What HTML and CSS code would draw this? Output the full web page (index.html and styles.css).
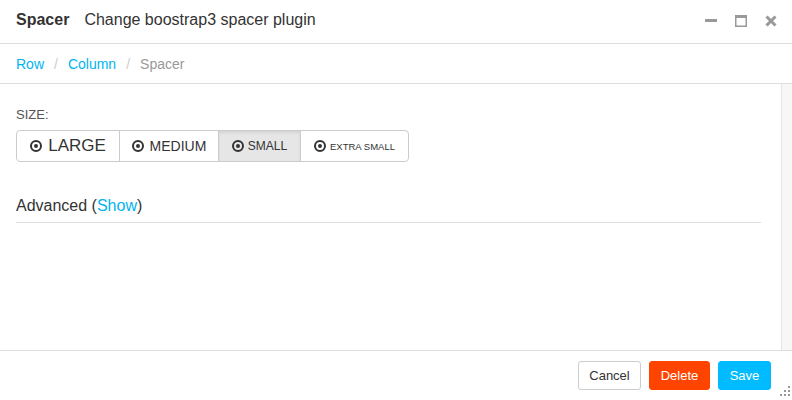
FILE: index.html
```html
<!DOCTYPE html>
<html>
<head>
<meta charset="utf-8">
<link rel="stylesheet" href="styles.css">
</head>
<body>
<div class="dialog">
  <div class="header">
    <div class="title"><span class="name">Spacer</span><span class="sub">Change boostrap3 spacer plugin</span></div>
    <div class="controls">
      <svg width="12" height="12" viewBox="0 0 12 12"><rect x="0" y="4" width="12" height="3" fill="#999"/></svg>
      <svg width="12" height="12" viewBox="0 0 12 12"><rect x="0.75" y="0.75" width="10.5" height="10.5" fill="none" stroke="#999" stroke-width="1.5"/><rect x="0" y="0" width="12" height="3" fill="#999"/></svg>
      <svg width="12" height="12" viewBox="0 0 12 12"><path d="M1.5 1.5 L10.5 10.5 M10.5 1.5 L1.5 10.5" stroke="#999" stroke-width="3"/></svg>
    </div>
  </div>
  <div class="crumbs">
    <a class="link">Row</a><span class="sep">/</span><a class="link">Column</a><span class="sep">/</span><span class="current">Spacer</span>
  </div>
  <div class="main">
    <div class="content">
      <div class="label">SIZE:</div>
      <div class="btn-group">
        <div class="seg seg-lg"><span class="radio"></span>LARGE</div>
        <div class="seg seg-md"><span class="radio"></span>MEDIUM</div>
        <div class="seg seg-sm active"><span class="radio"></span>SMALL</div>
        <div class="seg seg-xs"><span class="radio"></span>EXTRA SMALL</div>
      </div>
      <div class="advanced">Advanced (<a class="link">Show</a>)</div>
    </div>
    <div class="scrollbar"></div>
  </div>
  <div class="footer">
    <button class="btn btn-cancel">Cancel</button>
    <button class="btn btn-delete">Delete</button>
    <button class="btn btn-save">Save</button>
    <div class="grip">
      <svg width="12" height="12" viewBox="0 0 12 12">
        <rect x="9" y="0" width="2" height="2" fill="#999"/>
        <rect x="5" y="4" width="2" height="2" fill="#999"/>
        <rect x="9" y="4" width="2" height="2" fill="#999"/>
        <rect x="1" y="8" width="2" height="2" fill="#999"/>
        <rect x="5" y="8" width="2" height="2" fill="#999"/>
        <rect x="9" y="8" width="2" height="2" fill="#999"/>
      </svg>
    </div>
  </div>
</div>
</body>
</html>
```

FILE: styles.css
```css
html, body {
  margin: 0;
  padding: 0;
  background: #fff;
}
body {
  font-family: "Liberation Sans", Arial, sans-serif;
  color: #333;
}
.dialog {
  width: 792px;
  height: 400px;
  display: flex;
  flex-direction: column;
  overflow: hidden;
}
.header {
  height: 43px;
  border-bottom: 1px solid #ddd;
  display: flex;
  align-items: center;
  justify-content: space-between;
  padding: 0 15px 0 16px;
  box-sizing: content-box;
}
.title {
  font-size: 16px;
  color: #333;
  padding-bottom: 4px;
}
.name {
  font-weight: bold;
  margin-right: 15px;
}
.controls {
  display: flex;
  gap: 18px;
  padding-bottom: 1px;
}
.controls svg {
  display: block;
}
.crumbs {
  height: 38px;
  border-bottom: 1px solid #ddd;
  display: flex;
  align-items: center;
  padding-left: 16px;
  font-size: 14px;
  padding-top: 1px;
}
.link {
  color: #00b4f0;
  text-decoration: none;
}
.sep {
  color: #ccc;
  margin: 0 10px;
}
.current {
  color: #999;
}
.main {
  flex: 1;
  display: flex;
  min-height: 0;
}
.content {
  flex: 1;
  padding: 23px 20px 0 16px;
}
.scrollbar {
  width: 10px;
  background: #f7f7f7;
  border-left: 1px solid #e6e6e6;
}
.label {
  font-size: 13px;
  color: #555;
  line-height: 15px;
  margin-bottom: 8px;
  padding-top: 0;
}
.btn-group {
  display: inline-flex;
  border: 1px solid #ccc;
  border-radius: 4px;
  height: 30px;
  overflow: hidden;
}
.seg {
  display: flex;
  align-items: center;
  justify-content: center;
  border-right: 1px solid #ccc;
  color: #333;
}
.seg:last-child {
  border-right: none;
}
.seg-lg { width: 102px; font-size: 17px; }
.seg-md { width: 98px; font-size: 14px; }
.seg-sm { width: 81px; font-size: 12px; }
.seg-xs { width: 107px; font-size: 9.5px; }
.active {
  background: #e6e6e6;
  box-shadow: inset 0 2px 3px rgba(0,0,0,0.08);
}
.radio {
  width: 8px;
  height: 8px;
  border: 2px solid #333;
  border-radius: 50%;
  position: relative;
  margin-right: 6px;
  flex: none;
}
.seg-sm .radio, .seg-xs .radio { margin-right: 4px; }
.radio::after {
  content: "";
  position: absolute;
  left: 2px;
  top: 2px;
  width: 4px;
  height: 4px;
  border-radius: 50%;
  background: #333;
}
.advanced {
  margin-top: 35px;
  font-size: 16px;
  line-height: 18px;
  padding-bottom: 7px;
  border-bottom: 1px solid #ddd;
}
.footer {
  height: 49px;
  border-top: 1px solid #ddd;
  display: flex;
  align-items: center;
  justify-content: flex-end;
  gap: 8px;
  padding-right: 21px;
  position: relative;
}
.btn {
  height: 29px;
  font-family: "Liberation Sans", Arial, sans-serif;
  font-size: 13px;
  border-radius: 3px;
  padding: 0;
  cursor: pointer;
}
.btn-cancel {
  width: 63px;
  background: #fff;
  border: 1px solid #ccc;
  color: #333;
}
.btn-delete {
  width: 61px;
  background: #ff4400;
  border: 1px solid #ff4400;
  color: #fff;
}
.btn-save {
  width: 53px;
  background: #00bbff;
  border: 1px solid #00bbff;
  color: #fff;
}
.grip {
  position: absolute;
  right: 1px;
  bottom: 2px;
}
.grip svg { display: block; }
```
